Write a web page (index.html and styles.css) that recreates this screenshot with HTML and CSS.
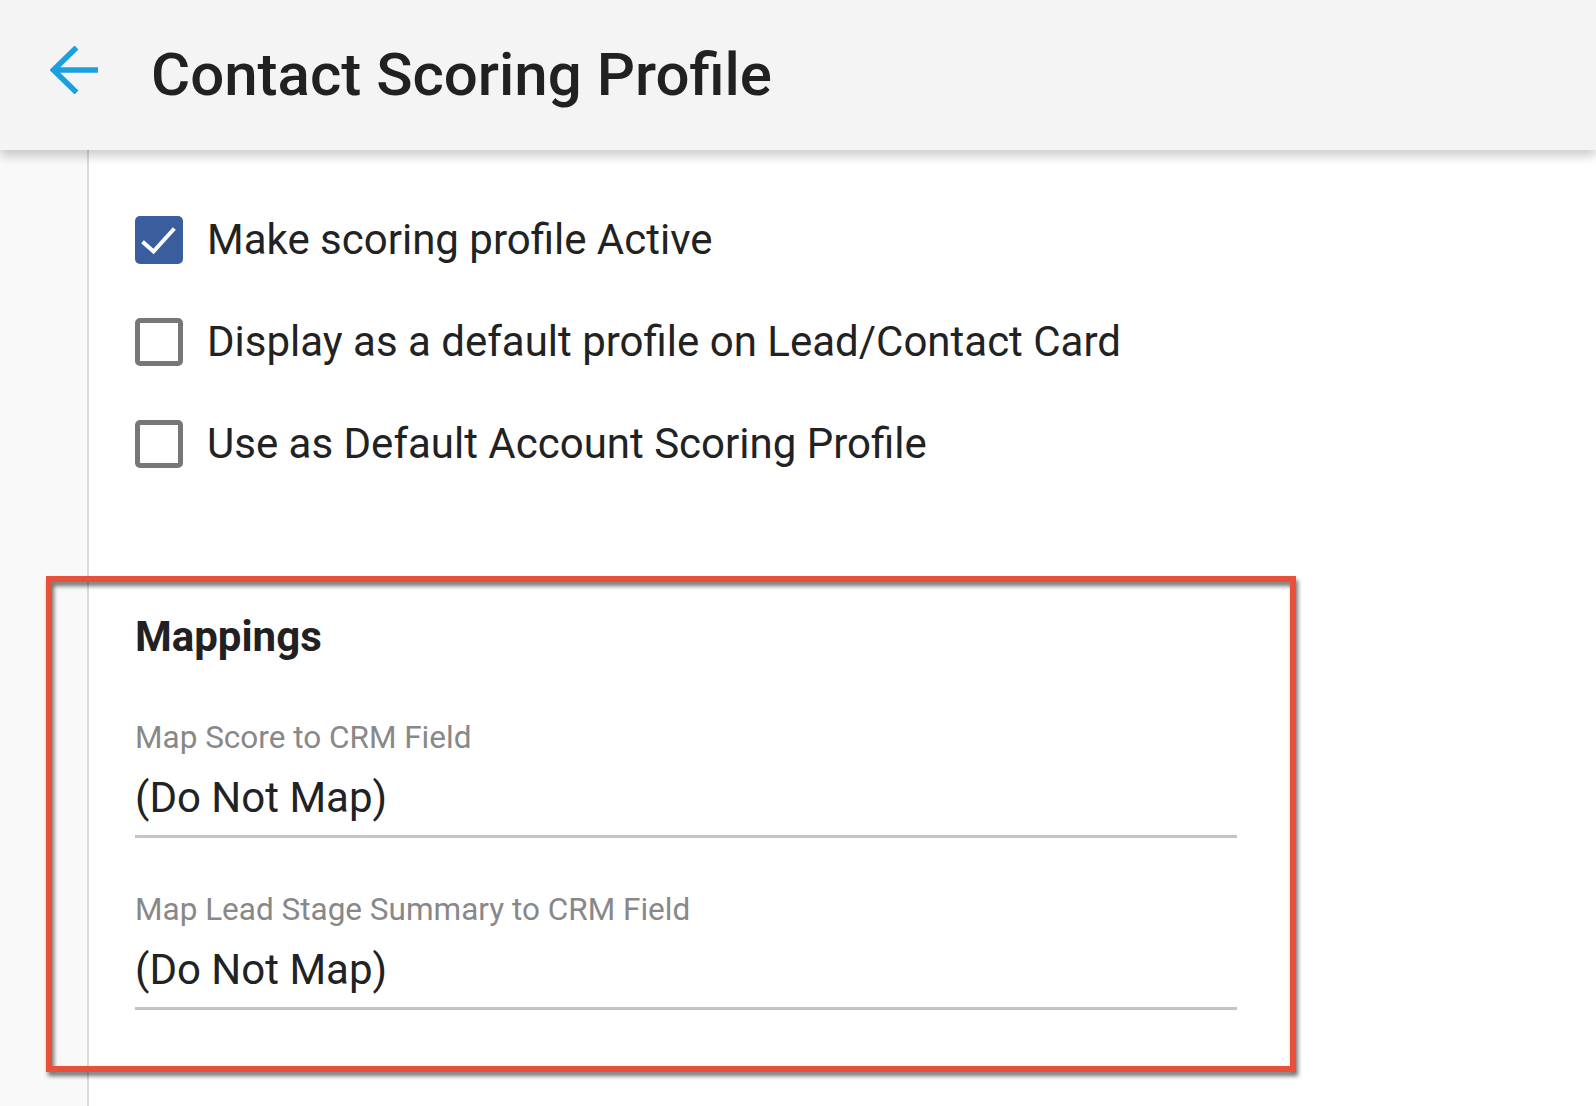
FILE: index.html
```html
<!DOCTYPE html>
<html lang="en">
<head>
<meta charset="utf-8">
<title>Contact Scoring Profile</title>
<link rel="stylesheet" href="styles.css">
</head>
<body>
<header class="header">
  <a class="back" href="#" aria-label="Back">
    <svg width="48" height="48" viewBox="0 0 48 48" fill="none" stroke="#1a9fe0" stroke-width="5.5">
      <path d="M48 24H5"/>
      <path d="M26.5 1.5L3.5 24L26.5 46.5"/>
    </svg>
  </a>
  <h1 class="title">Contact Scoring Profile</h1>
</header>
<div class="layout">
  <aside class="sidebar"></aside>
  <main class="main">
    <div class="options">
      <label class="option">
        <span class="box box-checked">
          <svg width="48" height="48" viewBox="0 0 48 48" fill="none" stroke="#fff" stroke-width="4" stroke-linecap="square">
            <path d="M9 27L18.5 35.5L38 14"/>
          </svg>
        </span>
        <span class="option-text">Make scoring profile Active</span>
      </label>
      <label class="option">
        <span class="box"></span>
        <span class="option-text">Display as a default profile on Lead/Contact Card</span>
      </label>
      <label class="option">
        <span class="box"></span>
        <span class="option-text">Use as Default Account Scoring Profile</span>
      </label>
    </div>
    <section class="mappings">
      <h2 class="mappings-title">Mappings</h2>
      <div class="field">
        <div class="field-label">Map Score to CRM Field</div>
        <div class="field-value">(Do Not Map)</div>
      </div>
      <div class="field">
        <div class="field-label">Map Lead Stage Summary to CRM Field</div>
        <div class="field-value">(Do Not Map)</div>
      </div>
    </section>
  </main>
</div>
</body>
</html>
```
FILE: styles.css
```css
html, body {
  margin: 0;
  padding: 0;
  background: #fff;
}
body {
  font-family: Roboto, "Liberation Sans", Arial, sans-serif;
  color: #222;
  height: 1106px;
  overflow: hidden;
}
.header {
  position: relative;
  z-index: 2;
  height: 150px;
  background: #f4f4f4;
  box-shadow: 0 6px 10px rgba(0, 0, 0, 0.2);
  display: flex;
  align-items: center;
  padding-left: 50px;
}
.back {
  display: flex;
  width: 48px;
  height: 48px;
  margin-right: 53px;
  margin-top: -11px;
}
.title {
  margin: 0;
  font-size: 60px;
  line-height: 60px;
  font-weight: 500;
  color: #212121;
  letter-spacing: 0;
}
.layout {
  display: flex;
  height: 956px;
}
.sidebar {
  width: 87px;
  flex: none;
  background: #f9f9f9;
  border-right: 2px solid #dadada;
}
.main {
  flex: 1;
  padding: 66px 0 0 46px;
}
.options {
  display: flex;
  flex-direction: column;
  gap: 54px;
}
.option {
  display: flex;
  align-items: center;
  height: 48px;
}
.box {
  width: 48px;
  height: 48px;
  box-sizing: border-box;
  border: 5px solid #777;
  border-radius: 5px;
  background: #fff;
  flex: none;
  display: flex;
}
.box-checked {
  border: none;
  background: #3a5e9d;
}
.option-text {
  margin-left: 24px;
  font-size: 42px;
  line-height: 48px;
  color: #222;
}
.mappings {
  position: relative;
  width: 1102px;
  margin-top: 145px;
  padding-bottom: 62px;
}
.mappings::before {
  content: "";
  position: absolute;
  left: -89px;
  top: -37px;
  width: 1250px;
  height: 496px;
  box-sizing: border-box;
  border: 6px solid #e8503a;
  filter: drop-shadow(2px 4px 2px rgba(0, 0, 0, 0.55));
  pointer-events: none;
}
.mappings-title {
  margin: 0;
  font-size: 42px;
  line-height: 48px;
  font-weight: 700;
  color: #212121;
}
.field {
  border-bottom: 3px solid #c4c4c4;
  padding-bottom: 13px;
  margin-top: 54px;
}
.mappings-title + .field {
  margin-top: 59px;
}
.field-label {
  font-size: 31.5px;
  line-height: 36px;
  color: #888;
}
.field-value {
  margin-top: 18px;
  font-size: 42px;
  line-height: 48px;
  color: #222;
}
```
